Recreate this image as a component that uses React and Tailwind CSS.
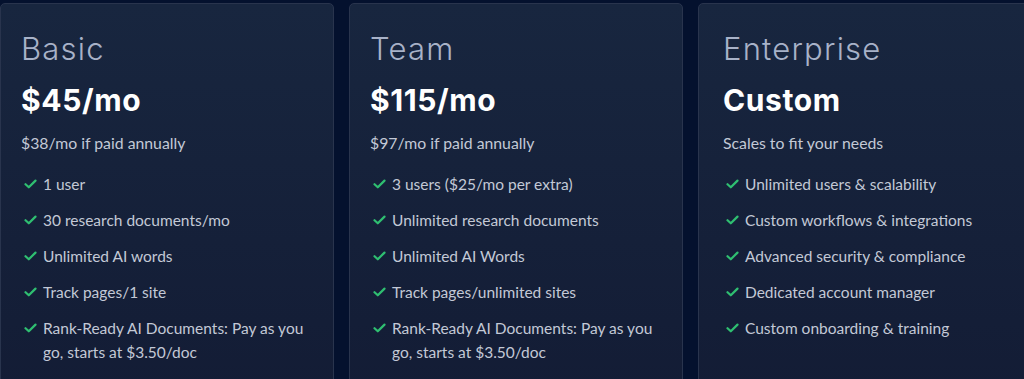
import React from "react";

const plans = [
  {
    name: "Basic",
    price: "$45/mo",
    sub: "$38/mo if paid annually",
    pad: "pl-[20px]",
    features: [
      "1 user",
      "30 research documents/mo",
      "Unlimited AI words",
      "Track pages/1 site",
      "Rank-Ready AI Documents: Pay as you go, starts at $3.50/doc",
    ],
  },
  {
    name: "Team",
    price: "$115/mo",
    sub: "$97/mo if paid annually",
    pad: "pl-[20px]",
    features: [
      "3 users ($25/mo per extra)",
      "Unlimited research documents",
      "Unlimited AI Words",
      "Track pages/unlimited sites",
      "Rank-Ready AI Documents: Pay as you go, starts at $3.50/doc",
    ],
  },
  {
    name: "Enterprise",
    price: "Custom",
    sub: "Scales to fit your needs",
    pad: "pl-[24px]",
    features: [
      "Unlimited users & scalability",
      "Custom workflows & integrations",
      "Advanced security & compliance",
      "Dedicated account manager",
      "Custom onboarding & training",
    ],
  },
];

function Check() {
  return (
    <svg width="13" height="10" viewBox="0 0 13 10" className="mt-[7px] shrink-0">
      <path d="M1.5 5.2 L4.8 8.3 L11.5 1.6" fill="none" stroke="#2fbf71" strokeWidth="2.2" strokeLinecap="round" strokeLinejoin="round" />
    </svg>
  );
}

export default function App() {
  return (
    <div className="w-[1024px] h-[379px] overflow-hidden bg-[#04112e]">
      <div className="flex gap-[15px] pt-[3px] w-[1040px]">
        {plans.map((p) => (
          <div
            key={p.name}
            className={`w-[334px] h-[400px] shrink-0 rounded-[5px] border border-[#29344d] bg-gradient-to-b from-[#18263f] to-[#131c35] pr-[16px] pt-[27px] ${p.pad}`}
          >
            <div className="text-[31px] leading-[36px] font-light text-[#a8b2c8] tracking-[1.2px]" style={{ fontFamily: "Inter, 'Open Sans', sans-serif" }}>
              {p.name}
            </div>
            <div className="mt-[15px] text-[30px] leading-[36px] font-bold text-white tracking-[0.6px]" style={{ fontFamily: "Inter, 'Open Sans', sans-serif" }}>
              {p.price}
            </div>
            <div className="mt-[13px] text-[15.8px] leading-[24px] text-[#c3c9d6]" style={{ fontFamily: "Lato, 'Noto Sans', sans-serif" }}>
              {p.sub}
            </div>
            <ul className="mt-[17px] flex flex-col gap-[12px]">
              {p.features.map((f) => (
                <li key={f} className="flex items-start gap-[6px] pl-[3px]">
                  <Check />
                  <span className="text-[15.5px] leading-[24px] text-[#c3c9d6] max-w-[270px]" style={{ fontFamily: "Lato, 'Noto Sans', sans-serif" }}>
                    {f}
                  </span>
                </li>
              ))}
            </ul>
          </div>
        ))}
      </div>
    </div>
  );
}
